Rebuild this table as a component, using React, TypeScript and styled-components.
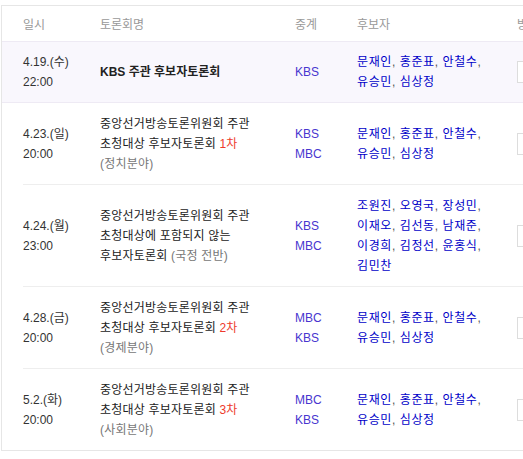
import React from "react";
import styled, { createGlobalStyle } from "styled-components";

const GlobalStyle = createGlobalStyle`
    html, body {
        margin: 0;
        padding: 0;
        background: #ffffff;
        overflow: hidden;
    }
    body {
        font-family: "Liberation Sans", "Noto Sans CJK KR", sans-serif;
        font-size: 12px;
        color: #333333;
    }
`

const Board = styled.div`
    width: 600px;
    margin: 5px 0 0 1px;
    border: 1px solid #e6e6e6;
    border-right: none;
`

const Cols = `
    display: grid;
    grid-template-columns: 77px 195px 62px 160px 1fr;
    align-items: center;
`

const Head = styled.div`
    ${Cols}
    height: 35px;
    padding-left: 21px;
    color: #999999;
    font-size: 12px;
`

const Row = styled.div<{ $hot?: boolean }>`
    background: ${(p) => (p.$hot ? "#f9f7fd" : "#ffffff")};
    border-top: ${(p) => (p.$hot ? "1px solid #eeeaf4" : "none")};
    border-bottom: ${(p) => (p.$hot ? "1px solid #eeeaf4" : "none")};
`

const RowInner = styled.div<{ $line?: boolean; $hot?: boolean }>`
    ${Cols}
    margin-left: 21px;
    padding: ${(p) => (p.$hot ? "10px 0" : "11px 0 10px")};
    line-height: 20px;
    border-bottom: ${(p) => (p.$line ? "1px solid #eeeeee" : "none")};
`

const When = styled.div`
    color: #333333;
`

const Title = styled.div<{ $bold?: boolean }>`
    color: #222222;
    font-weight: ${(p) => (p.$bold ? 700 : 400)};
    letter-spacing: ${(p) => (p.$bold ? "0" : "0.2px")};
`

const Round = styled.span`
    color: #ee3a2b;
`

const Sub = styled.span`
    color: #777777;
`

const Channels = styled.div`
    color: #4836cf;
    display: flex;
    flex-direction: column;
`

const Names = styled.div`
    color: #0000c8;
    letter-spacing: 0.6px;
`

const Comma = styled.span`
    color: #555555;
`

const ActBtn = styled.div`
    width: 60px;
    height: 20px;
    border: 1px solid #dddddd;
    background: #ffffff;
`

type Debate = {
    date: string;
    time: string;
    title: React.ReactNode;
    bold?: boolean;
    channels: string[];
    names: string[];
};

const five = ["문재인", "홍준표", "안철수", "유승민", "심상정"];

const debates: Debate[] = [
    { date: "4.19.(수)", time: "22:00", title: "KBS 주관 후보자토론회", bold: true, channels: ["KBS"], names: five },
    {
        date: "4.23.(일)",
        time: "20:00",
        title: (
            <>
                중앙선거방송토론위원회 주관<br />초청대상 후보자토론회 <Round>1차</Round>
                <br />
                <Sub>(정치분야)</Sub>
            </>
        ),
        channels: ["KBS", "MBC"],
        names: five,
    },
    {
        date: "4.24.(월)",
        time: "23:00",
        title: (
            <>
                중앙선거방송토론위원회 주관<br />초청대상에 포함되지 않는<br />후보자토론회 <Sub>(국정 전반)</Sub>
            </>
        ),
        channels: ["KBS", "MBC"],
        names: ["조원진", "오영국", "장성민", "이재오", "김선동", "남재준", "이경희", "김정선", "윤홍식", "김민찬"],
    },
    {
        date: "4.28.(금)",
        time: "20:00",
        title: (
            <>
                중앙선거방송토론위원회 주관<br />초청대상 후보자토론회 <Round>2차</Round>
                <br />
                <Sub>(경제분야)</Sub>
            </>
        ),
        channels: ["MBC", "KBS"],
        names: five,
    },
    {
        date: "5.2.(화)",
        time: "20:00",
        title: (
            <>
                중앙선거방송토론위원회 주관<br />초청대상 후보자토론회 <Round>3차</Round>
                <br />
                <Sub>(사회분야)</Sub>
            </>
        ),
        channels: ["MBC", "KBS"],
        names: five,
    },
];

const NameList: React.FC<{ names: string[] }> = ({ names }) => (
    <Names>
        {names.map((n, i) => (
            <React.Fragment key={n}>
                {n}
                {i < names.length - 1 && <Comma>,</Comma>}
                {i % 3 === 2 && i < names.length - 1 ? <br /> : i < names.length - 1 ? " " : null}
            </React.Fragment>
        ))}
    </Names>
);

const App: React.FC = () => {
    return (
        <>
            <GlobalStyle />
            <Board>
                <Head>
                    <div>일시</div>
                    <div>토론회명</div>
                    <div>중계</div>
                    <div>후보자</div>
                    <div>방송</div>
                </Head>
                {debates.map((d, i) => (
                    <Row key={d.date} $hot={i === 0}>
                        <RowInner $hot={i === 0} $line={i > 0 && i < debates.length - 1}>
                            <When>
                                {d.date}
                                <br />
                                {d.time}
                            </When>
                            <Title $bold={d.bold}>{d.title}</Title>
                            <Channels>
                                {d.channels.map((c) => (
                                    <span key={c}>{c}</span>
                                ))}
                            </Channels>
                            <NameList names={d.names} />
                            <ActBtn />
                        </RowInner>
                    </Row>
                ))}
            </Board>
        </>
    );
};

export default App;
